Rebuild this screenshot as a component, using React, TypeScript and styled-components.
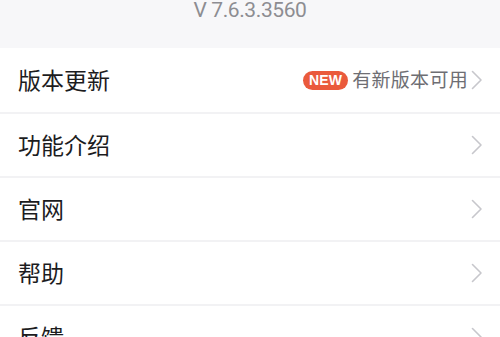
import React from 'react'
import styled, { createGlobalStyle } from 'styled-components'

const GlobalStyle = createGlobalStyle`
  html, body {
    margin: 0;
    padding: 0;
    background: #ffffff;
    font-family: "Noto Sans CJK SC", "Noto Sans", sans-serif;
  }
`

const Page = styled.div`
  width: 500px;
  height: 337px;
  overflow: hidden;
  background: #ffffff;
`

const Header = styled.div`
  height: 48px;
  background: #f7f7f9;
  display: flex;
  justify-content: center;
  overflow: hidden;
`

const Version = styled.div`
  margin-top: -2px;
  font-family: Roboto, "Liberation Sans", sans-serif;
  font-size: 21px;
  line-height: 24px;
  letter-spacing: -0.4px;
  color: #8d8d92;
`

const List = styled.div`
  display: flex;
  flex-direction: column;
`

const Row = styled.div`
  height: 62px;
  display: flex;
  align-items: center;
  padding: 0 17px 0 18px;
  background: #ffffff;
  border-top: 2px solid #f2f2f4;

  &:first-child {
    border-top: none;
    height: 64px;
  }
`

const Label = styled.div`
  flex: 1;
  padding-bottom: 3px;
  font-size: 23px;
  line-height: 30px;
  color: #1c1c1e;
`

const Extra = styled.div`
  display: flex;
  align-items: center;
  gap: 4px;
  margin-right: 3px;
`

const Badge = styled.span`
  height: 19px;
  padding: 0 6px;
  border-radius: 10px;
  background: #ea5a3c;
  color: #ffffff;
  font-family: "Liberation Sans", Arial, sans-serif;
  font-size: 14px;
  line-height: 19px;
  font-weight: 700;
  letter-spacing: 0.2px;
`

const ExtraText = styled.span`
  padding-bottom: 2px;
  font-size: 19px;
  line-height: 24px;
  letter-spacing: 0.3px;
  color: #6e6e73;
`

const Chevron = () => (
  <svg width="12" height="20" viewBox="0 0 12 20" fill="none">
    <path d="M1.5 1.5 L10 10 L1.5 18.5" stroke="#c7c7cc" strokeWidth="1.6" strokeLinecap="round" strokeLinejoin="round" />
  </svg>
)

const items = ['版本更新', '功能介绍', '官网', '帮助', '反馈']

const App: React.FC = () => (
  <Page>
    <GlobalStyle />
    <Header>
      <Version>V 7.6.3.3560</Version>
    </Header>
    <List>
      {items.map((label, i) => (
        <Row key={label}>
          <Label>{label}</Label>
          {i === 0 && (
            <Extra>
              <Badge>NEW</Badge>
              <ExtraText>有新版本可用</ExtraText>
            </Extra>
          )}
          <Chevron />
        </Row>
      ))}
    </List>
  </Page>
)

export default App
